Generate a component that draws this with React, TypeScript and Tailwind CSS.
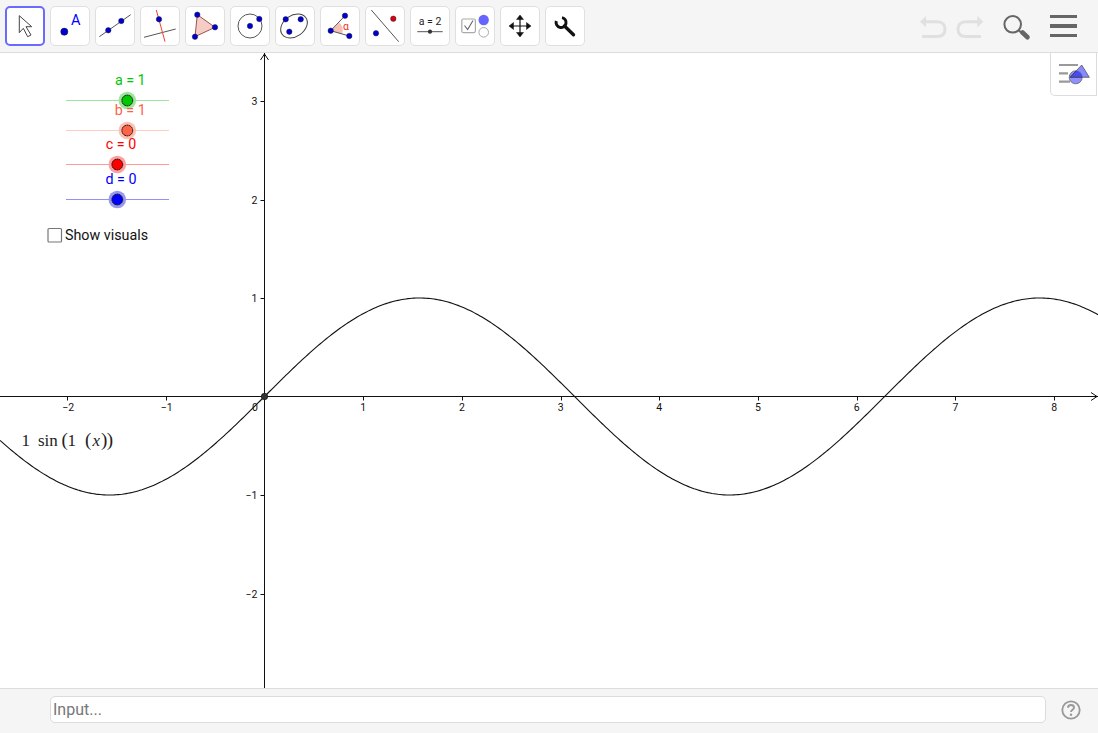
import type { ReactNode } from "react";

const OX = 264.5;
const OY = 343.5;
const UNIT_X = 98.7;
const UNIT_Y = 98.5;

function sinePath() {
  const pts: string[] = [];
  for (let px = 0; px <= 1098; px += 2) {
    const x = (px - OX) / UNIT_X;
    const y = OY - Math.sin(x) * UNIT_Y;
    pts.push(`${px === 0 ? "M" : "L"}${px} ${y.toFixed(2)}`);
  }
  return pts.join(" ");
}

const BLUE = "#0000cc";

function Dot({ x, y, r = 2.7, fill = BLUE }: { x: number; y: number; r?: number; fill?: string }) {
  return <circle cx={x} cy={y} r={r} fill={fill} stroke="#1a1a4a" strokeWidth={0.5} />;
}

const toolIcons: ReactNode[] = [
  <path
    key="move"
    d="M14.3 9.7 L26.7 20.7 L21 20.7 L26 29 L22.7 30.7 L18.3 22.3 L14.3 26.7 Z"
    fill="#fff"
    stroke="#444"
    strokeWidth={1}
  />,
  <g key="point">
    <Dot x={14.3} y={25.7} r={3.6} />
    <text x={25.7} y={19} textAnchor="middle" fontSize={14.5} fill="#0000ff" fontFamily="Roboto, sans-serif">
      A
    </text>
  </g>,
  <g key="line">
    <line x1={4.3} y1={30.7} x2={35.7} y2={8.7} stroke="#555" />
    <Dot x={13.3} y={24.3} />
    <Dot x={26.3} y={15} />
  </g>,
  <g key="perp">
    <line x1={4} y1={31.3} x2={35.7} y2={23} stroke="#555" />
    <line x1={16.3} y1={4} x2={25} y2={35.7} stroke="#f04030" />
    <Dot x={19} y={13.3} />
  </g>,
  <g key="poly">
    <path d="M12.3 8.7 L30 21.3 L10 30.7 Z" fill="#f4cdc6" stroke="#a05048" />
    <Dot x={12.3} y={8.7} />
    <Dot x={30} y={21.3} />
    <Dot x={10} y={30.7} />
  </g>,
  <g key="circle">
    <circle cx={20} cy={20} r={12} fill="none" stroke="#555" />
    <Dot x={20} y={20} />
    <Dot x={29.3} y={13} />
  </g>,
  <g key="conic">
    <ellipse cx={19} cy={20} rx={14.5} ry={10.5} transform="rotate(-35 19 20)" fill="none" stroke="#444" />
    <Dot x={10.7} y={13.3} />
    <Dot x={25.7} y={13.3} />
    <Dot x={14.3} y={25.7} />
  </g>,
  <g key="angle">
    <path d="M10.7 24.7 L19.3 16.5 A11 11 0 0 1 22 27.8 Z" fill="#f6c0b6" />
    <path d="M25 9.7 L10.7 24.7 L29.3 30" fill="none" stroke="#555" />
    <Dot x={25} y={9.7} />
    <Dot x={10.7} y={24.7} />
    <Dot x={29.3} y={30} />
    <text x={26} y={23.5} textAnchor="middle" fontSize={10.5} fill="#f03020" fontFamily="Roboto, sans-serif">
      α
    </text>
  </g>,
  <g key="reflect">
    <line x1={6.3} y1={4} x2={33.7} y2={35.7} stroke="#555" />
    <Dot x={28.3} y={12.7} fill="#e00000" />
    <Dot x={11} y={27.3} />
  </g>,
  <g key="slider">
    <text x={20} y={19} textAnchor="middle" fontSize={10.5} fill="#222" fontFamily="Roboto, sans-serif">
      a = 2
    </text>
    <line x1={7.3} y1={25.7} x2={32.7} y2={25.7} stroke="#555" />
    <circle cx={20} cy={25.7} r={2.1} fill="#333" />
  </g>,
  <g key="check">
    <rect x={6.8} y={13} width={13.6} height={13.6} rx={1.5} fill="#fff" stroke="#aaa" strokeWidth={1.2} />
    <path d="M9.5 19.5 L12.6 23.5 L18 14.5" fill="none" stroke="#666" strokeWidth={1.1} />
    <circle cx={28.7} cy={14} r={5.2} fill="#6666ff" />
    <circle cx={28.7} cy={26.3} r={4.8} fill="#fff" stroke="#aaa" />
  </g>,
  <g key="pan" fill="#111" stroke="#111">
    <path d="M20 11 V29 M11 20 H29" fill="none" strokeWidth={1.2} />
    <path d="M20 9 L23.5 13.5 H16.5 Z M20 31 L23.5 26.5 H16.5 Z M9 20 L13.5 16.5 V23.5 Z M31 20 L26.5 16.5 V23.5 Z" strokeWidth={0.5} />
  </g>,
  <g key="wrench" fill="none" stroke="#111">
    <path d="M11.3 15 A5 5 0 1 0 17 11.6" strokeWidth={3} />
    <path d="M19.5 20 L28.5 28.8" strokeWidth={3.3} strokeLinecap="round" />
  </g>,
];

function Tool({ active, children }: { active?: boolean; children: ReactNode }) {
  return (
    <div
      className={
        active
          ? "h-10 w-10 shrink-0 rounded-[5px] border-2 border-[#6a6aff] bg-white"
          : "h-10 w-10 shrink-0 rounded-[5px] border border-[#e0e0e0] bg-white"
      }
    >
      <svg
        viewBox="0 0 40 40"
        width={40}
        height={40}
        className={active ? "-ml-[2px] -mt-[2px] block" : "-ml-px -mt-px block"}
      >
        {children}
      </svg>
    </div>
  );
}

function Slider({
  y,
  knob,
  color,
  track,
  halo,
  label,
  labelX,
  labelY,
}: {
  y: number;
  knob: number;
  color: string;
  track: string;
  halo: string;
  label: string;
  labelX: number;
  labelY: number;
}) {
  return (
    <g>
      <line x1={66} y1={y} x2={169} y2={y} stroke={track} strokeWidth={1} />
      <circle cx={knob} cy={y} r={8.8} fill={halo} />
      <circle cx={knob} cy={y} r={5.4} fill={color} stroke="#111" strokeWidth={1} strokeDasharray="2 0.4" />
      <text x={labelX} y={labelY} textAnchor="middle" fontSize={14.3} fill={color} fontFamily="Roboto, sans-serif">
        {label}
      </text>
    </g>
  );
}

function Graph() {
  const xTicks = [-2, -1, 1, 2, 3, 4, 5, 6, 7, 8];
  const yTicks = [3, 2, 1, -1, -2];
  return (
    <svg width={1098} height={635} viewBox="0 0 1098 635" className="block">
      <g stroke="#111" strokeWidth={1}>
        <line x1={0} y1={OY} x2={1098} y2={OY} />
        <line x1={OX} y1={0} x2={OX} y2={635} />
        <path d="M260.5 7 L264.5 1 L268.5 7" fill="none" />
        <path d="M1091 339.5 L1097 343.5 L1091 347.5" fill="none" />
        {xTicks.map((t) => {
          const x = Math.round(OX + t * UNIT_X) + 0.5;
          return <line key={t} x1={x} y1={OY} x2={x} y2={OY + 4} />;
        })}
        {yTicks.map((t) => {
          const y = Math.round(OY - t * UNIT_Y) + 0.5;
          return <line key={t} x1={OX - 4} y1={y} x2={OX} y2={y} />;
        })}
      </g>
      <g fontSize={10.5} fill="#111" fontFamily="Roboto, sans-serif">
        {xTicks.map((t) => (
          <text key={t} x={OX + t * UNIT_X + (t < 0 ? 1 : 0)} y={358} textAnchor="middle">
            {t < 0 ? `\u2212${-t}` : t}
          </text>
        ))}
        {yTicks.map((t) => (
          <text key={t} x={OX - 7} y={OY - t * UNIT_Y + 4} textAnchor="end">
            {t < 0 ? `\u2212${-t}` : t}
          </text>
        ))}
        <text x={255} y={358} textAnchor="middle">
          0
        </text>
      </g>
      <path d={sinePath()} fill="none" stroke="#111" strokeWidth={1.1} />
      <circle cx={OX} cy={OY} r={3.2} fill="#333" stroke="#111" strokeWidth={0.7} />

      <Slider y={47.5} knob={127.3} color="#00c800" track="#9fe69f" halo="#9de59d" label="a = 1" labelX={130.3} labelY={32} />
      <Slider y={77.5} knob={127.3} color="#ff6347" track="#ffcdc4" halo="#ffc0b4" label="b = 1" labelX={130.3} labelY={62} />
      <Slider y={111.5} knob={117.3} color="#ff0000" track="#ff9a9a" halo="#ff9f9f" label="c = 0" labelX={121} labelY={96} />
      <Slider y={146.5} knob={117.3} color="#0000ff" track="#9090ff" halo="#9898f0" label="d = 0" labelX={121} labelY={131} />

      <rect x={48} y={175.5} width={13.5} height={13.5} fill="#fff" stroke="#777" strokeWidth={1.2} rx={1} />
      <text x={65} y={187} fontSize={14.3} fill="#111" fontFamily="Roboto, sans-serif">
        Show visuals
      </text>

      <text y={392.5} fontSize={17} fill="#222" fontFamily="'Liberation Serif', serif">
        <tspan x={21.5}>1</tspan>
        <tspan x={38}>sin</tspan>
        <tspan x={61.5} fontSize={19}>(</tspan>
        <tspan x={67.5}>1</tspan>
        <tspan x={85} fontSize={19}>(</tspan>
        <tspan x={92.5} fontStyle="italic">x</tspan>
        <tspan x={101} fontSize={19}>)</tspan>
        <tspan x={106.8} fontSize={19}>)</tspan>
      </text>
    </svg>
  );
}

export default function App() {
  return (
    <div className="flex h-[733px] w-[1098px] flex-col overflow-hidden bg-white font-['Roboto',sans-serif]">
      <header className="flex h-[53px] shrink-0 items-center justify-between border-b border-[#dcdcdc] bg-[#f5f5f5] pl-[5px] pr-[21px]">
        <div className="flex gap-[5px]">
          {toolIcons.map((icon, i) => (
            <Tool key={i} active={i === 0}>
              {icon}
            </Tool>
          ))}
        </div>
        <div className="flex items-center">
          <svg width={78} height={30} viewBox="0 0 78 30" fill="none" stroke="#e0e0e0" strokeWidth={3}>
            <path d="M8 10.7 H21 C26.5 10.7 29 14 29 18 C29 22.5 26.5 25.5 21 25.5 H6" />
            <path d="M4 10.7 L10 5 V16.3 Z" fill="#e0e0e0" stroke="none" />
            <path d="M63 10.7 H50 C44.5 10.7 42 14 42 18 C42 22.5 44.5 25.5 50 25.5 H65" />
            <path d="M67.3 10.7 L61.3 5 V16.3 Z" fill="#e0e0e0" stroke="none" />
          </svg>
          <svg width={34} height={30} viewBox="0 0 34 30" fill="none" className="ml-[8px]">
            <circle cx={10.7} cy={13.3} r={8.3} stroke="#666" strokeWidth={2} />
            <path d="M16.5 19 L20 22.5" stroke="#666" strokeWidth={2} />
            <path d="M20.5 21.5 L25.5 26.2" stroke="#666" strokeWidth={4.6} strokeLinecap="round" />
          </svg>
          <div className="ml-[14px] flex w-[27px] flex-col gap-[6px]">
            <div className="h-[3.5px] bg-[#666]" />
            <div className="h-[3.5px] bg-[#666]" />
            <div className="h-[3.5px] bg-[#666]" />
          </div>
        </div>
      </header>

      <main className="relative min-h-0 flex-1">
        <Graph />
        <div className="absolute right-px top-0 flex h-[43px] w-[47px] items-center rounded-bl-[5px] border-b border-l border-r border-[#dcdcdc] bg-white pl-[7px]">
          <svg width={34} height={28} viewBox="0 0 34 28">
            <defs>
              <clipPath id="styleBarCircle">
                <circle cx={17.7} cy={17.3} r={6.5} />
              </clipPath>
            </defs>
            <path d="M1 5 H20 M1 13.3 H10 M1 21.7 H12" stroke="#999" strokeWidth={2.2} />
            <path d="M23.7 5 L31.3 17.3 H12 Z" fill="#8a8aff" stroke="#555" strokeWidth={0.8} />
            <circle cx={17.7} cy={17.3} r={6.5} fill="#9090ff" stroke="#666" strokeWidth={0.8} />
            <path
              d="M23.7 5 L31.3 17.3 H12 Z"
              fill="#4a4af0"
              stroke="#333"
              strokeWidth={0.8}
              clipPath="url(#styleBarCircle)"
            />
          </svg>
        </div>
      </main>

      <footer className="flex h-[45px] shrink-0 items-center border-t border-[#dcdcdc] bg-[#f5f5f5] pb-[3px] pl-[50px] pr-[17px]">
        <div className="flex h-[27px] flex-1 items-center rounded-[5px] border border-[#dcdcdc] bg-white pl-[2px] text-[16px] text-[#777]">
          Input...
        </div>
        <svg width={20} height={20} viewBox="0 0 20 20" fill="none" className="ml-[15px] mt-px">
          <circle cx={10} cy={10} r={8.7} stroke="#999" strokeWidth={1.8} />
          <path d="M7 7.8 C7 5.8 8.4 5 10 5 C11.8 5 13 6 13 7.5 C13 9.6 10 9.8 10 12" stroke="#999" strokeWidth={1.9} />
          <circle cx={10} cy={14.7} r={1.2} fill="#999" />
        </svg>
      </footer>
    </div>
  );
}
